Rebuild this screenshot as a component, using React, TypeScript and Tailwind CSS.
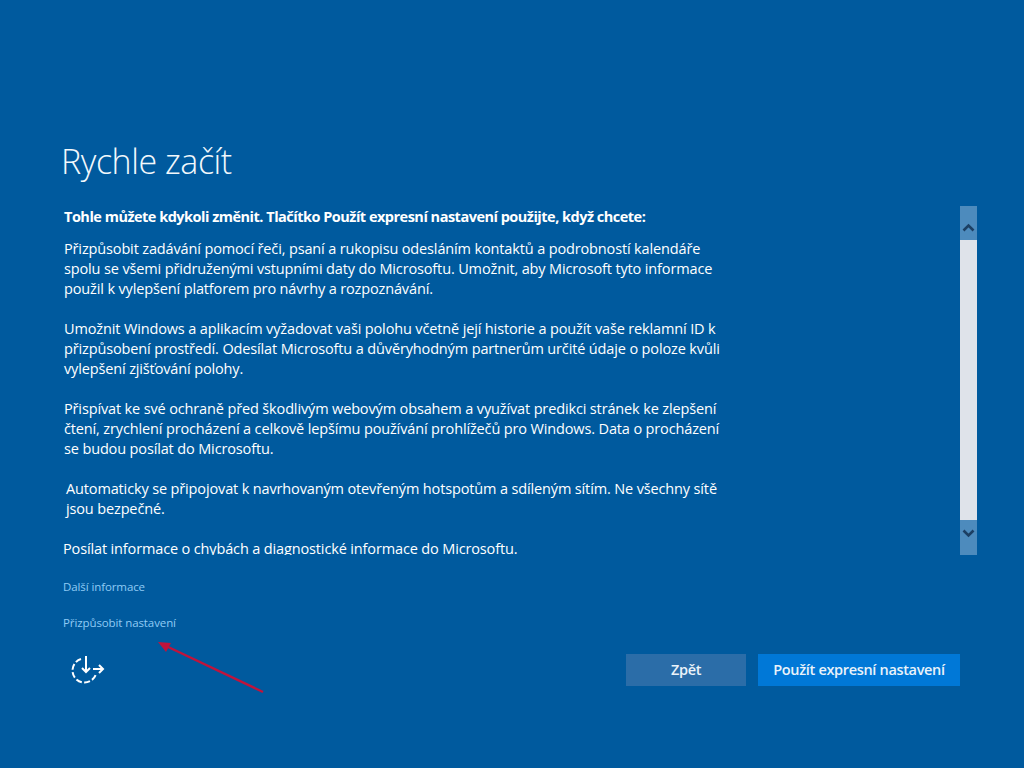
const paragraphs: { lines: string[]; cls: string }[] = [
  {
    cls: "",
    lines: [
      "Přizpůsobit zadávání pomocí řeči, psaní a rukopisu odesláním kontaktů a podrobností kalendáře",
      "spolu se všemi přidruženými vstupními daty do Microsoftu. Umožnit, aby Microsoft tyto informace",
      "použil k vylepšení platforem pro návrhy a rozpoznávání.",
    ],
  },
  {
    cls: "",
    lines: [
      "Umožnit Windows a aplikacím vyžadovat vaši polohu včetně její historie a použít vaše reklamní ID k",
      "přizpůsobení prostředí. Odesílat Microsoftu a důvěryhodným partnerům určité údaje o poloze kvůli",
      "vylepšení zjišťování polohy.",
    ],
  },
  {
    cls: "",
    lines: [
      "Přispívat ke své ochraně před škodlivým webovým obsahem a využívat predikci stránek ke zlepšení",
      "čtení, zrychlení procházení a celkově lepšímu používání prohlížečů pro Windows. Data o procházení",
      "se budou posílat do Microsoftu.",
    ],
  },
  {
    cls: "ml-[2px]",
    lines: [
      "Automaticky se připojovat k navrhovaným otevřeným hotspotům a sdíleným sítím. Ne všechny sítě",
      "jsou bezpečné.",
    ],
  },
  {
    cls: "-ml-px",
    lines: ["Posílat informace o chybách a diagnostické informace do Microsoftu."],
  },
];

export default function App() {
  return (
    <div className="relative flex h-[768px] w-[1024px] flex-col overflow-hidden bg-[#005a9e] pl-[62px] pr-[47px] pt-[141px] font-['Open_Sans','Noto_Sans',sans-serif] text-white">
      <h1 className="-ml-px h-[40px] text-[34px] font-light leading-[40px] tracking-[-0.45px] text-[#f2f8fc]">Rychle začít</h1>
      <div className="mt-[26px] flex h-[348px] justify-between">
        <div className="h-[348px] overflow-hidden pl-[2px] text-[14.5px] leading-[20px] tracking-[-0.14px]">
          <p className="h-[20px] whitespace-nowrap font-bold tracking-[-0.5px]">
            Tohle můžete kdykoli změnit. Tlačítko Použít expresní nastavení použijte, když chcete:
          </p>
          <div className="mt-[12px] flex flex-col gap-[20px]">
            {paragraphs.map((p, i) => (
              <div key={i} className={p.cls}>
                {p.lines.map((l) => (
                  <p key={l} className="whitespace-nowrap">{l}</p>
                ))}
              </div>
            ))}
          </div>
        </div>
        <div className="-mt-px flex h-[349px] w-[17px] flex-col bg-[#dfe3ea]">
          <div className="flex h-[34px] items-center justify-center bg-[#4d8bbd] pt-[9px]">
            <svg width="13" height="10" viewBox="0 0 13 10" fill="none" stroke="#1c3f63" strokeWidth="2.6">
              <path d="M1.5 7.5 6.5 2.5l5 5" />
            </svg>
          </div>
          <div className="flex-1" />
          <div className="flex h-[35px] items-center justify-center bg-[#4d8bbd] pb-[9px]">
            <svg width="13" height="10" viewBox="0 0 13 10" fill="none" stroke="#1c3f63" strokeWidth="2.6">
              <path d="M1.5 2.5 6.5 7.5l5-5" />
            </svg>
          </div>
        </div>
      </div>
      <a className="mt-[23px] h-[18px] pl-px text-[11.5px] leading-[18px] tracking-[-0.1px] text-[#8fcbf5]">Další informace</a>
      <a className="mt-[18px] h-[18px] pl-px text-[11.5px] leading-[18px] tracking-[-0.1px] text-[#8fcbf5]">Přizpůsobit nastavení</a>
      <div className="mt-[22px] flex items-center justify-between pr-[17px]">
        <svg className="ml-[9px]" width="36" height="32" viewBox="0 0 36 32" fill="none" stroke="#fff" strokeWidth="2">
          <path d="M10 5A12 12 0 1 0 25.3 18.7" strokeDasharray="6 2.4" />
          <path d="M15 2v16" />
          <path d="M11 14l4 4 4-4" />
          <path d="M22 15h10" />
          <path d="M28 11l4 4-4 4" />
        </svg>
        <div className="flex gap-[12px]">
          <button className="h-[32px] w-[120px] bg-[#2b6da8] text-[14.5px] font-semibold tracking-[-0.33px] text-[#eaf3fa]">Zpět</button>
          <button className="h-[32px] w-[202px] bg-[#0078d7] text-[14.5px] font-semibold tracking-[-0.33px] text-[#eaf3fa]">Použít expresní nastavení</button>
        </div>
      </div>
      <svg className="absolute left-[150px] top-[635px]" width="120" height="62" viewBox="0 0 120 62" fill="none">
        <path d="M113 57 14 10" stroke="#c0143c" strokeWidth="2.4" />
        <path d="M8 7 21 8l-5 9z" fill="#c0143c" />
      </svg>
    </div>
  );
}
